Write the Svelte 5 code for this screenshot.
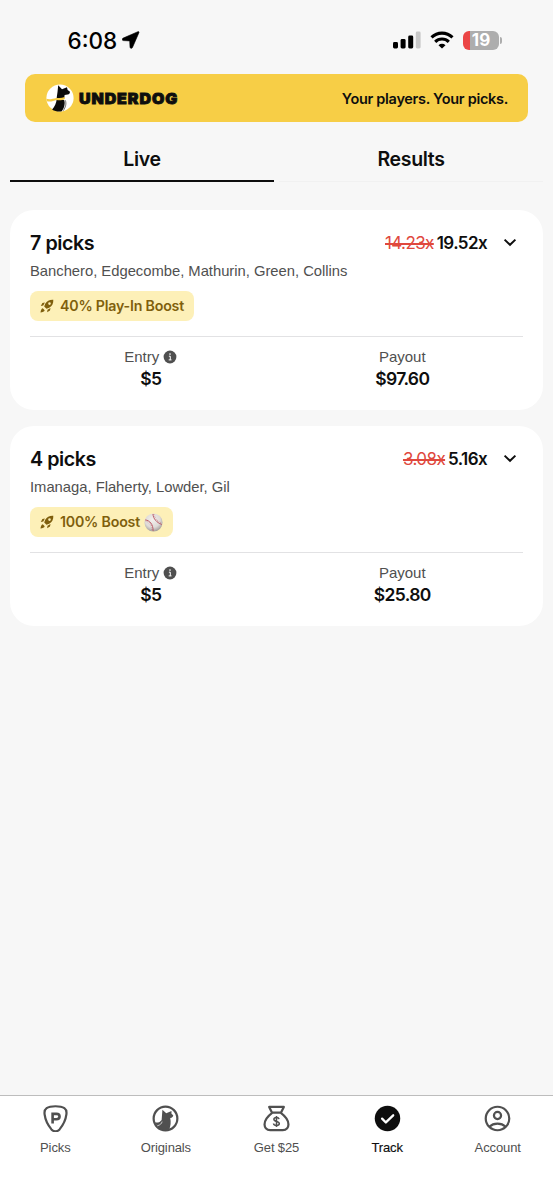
<script lang="ts">
  interface Entry {
    title: string;
    players: string;
    oldMultiplier: string;
    multiplier: string;
    boost: string;
    baseball?: boolean;
    entry: string;
    payout: string;
  }

  const tabs = ["Live", "Results"];
  const navItems = ["Picks", "Originals", "Get $25", "Track", "Account"];

  const entries: Entry[] = [
    {
      title: "7 picks",
      players: "Banchero, Edgecombe, Mathurin, Green, Collins",
      oldMultiplier: "14.23x",
      multiplier: "19.52x",
      boost: "40% Play-In Boost",
      entry: "$5",
      payout: "$97.60",
    },
    {
      title: "4 picks",
      players: "Imanaga, Flaherty, Lowder, Gil",
      oldMultiplier: "3.08x",
      multiplier: "5.16x",
      boost: "100% Boost",
      baseball: true,
      entry: "$5",
      payout: "$25.80",
    },
  ];

  let activeTab = $state("Live");
  let activeNav = $state("Track");
</script>

<div class="screen">
  <header class="status">
    <div class="status__left">
      <span class="status__time">6:08</span>
      <svg class="status__location" viewBox="0 0 18 18" aria-hidden="true">
        <path d="M15.9.7 1.2 7.1c-1.4.6-1.2 2.4.3 2.5l6.2.3.3 6.2c.1 1.5 1.9 1.7 2.5.3L16.9 1.7c.3-.8-.2-1.3-1-1Z" stroke="currentColor" stroke-width=".6" />
      </svg>
    </div>
    <div class="status__right">
      <svg class="status__signal" viewBox="0 0 28 18" aria-hidden="true">
        <rect x="0" y="11" width="5" height="6.5" rx="1.4" />
        <rect x="7.6" y="8" width="5" height="9.5" rx="1.4" />
        <rect x="15.2" y="4.6" width="5" height="12.9" rx="1.4" />
        <rect x="22.8" y="0.6" width="4.8" height="16.9" rx="1.4" fill="#c7c7c7" />
      </svg>
      <svg class="status__wifi" viewBox="0 0 24 18" aria-hidden="true">
        <path d="M1.5 6.4a15.1 15.1 0 0 1 21 0" />
        <path d="M5.2 10.8a9.8 9.8 0 0 1 13.6 0" />
        <path class="status__wifi-dot" d="M12 17.6 8.5 14.3a5 5 0 0 1 7 0Z" />
      </svg>
      <div class="battery">
        <div class="battery__body"><span>19</span></div>
        <div class="battery__cap"></div>
      </div>
    </div>
  </header>

  <div class="banner">
    <div class="banner__brand">
      <svg viewBox="0 0 28 28" aria-hidden="true">
        <circle cx="14" cy="14" r="13.6" fill="#fff" />
        <path d="M12.2 1.2 16 5.2l5-1.9.6 2.8 2.2 1.4c.5 1.7-.5 2.8-2.2 3l-3 .4-.4 3.6-7.6.6c.2-3.1 1-6.8 1.2-9.9Z" fill="#0b0b0b" />
        <path d="m10.8 14.6 7.3 1.5c1.4 3 .2 8.3-2.4 11.2-3.2.7-6.8 0-9.6-1.9 2.7-2.6 4.1-5.7 4.7-10.8Z" fill="#0b0b0b" />
        <path d="M.4 14.8c3.4 1 6.7-.2 10-.9 3 .4 5.5.3 8.2-.8l.2 1.8c-2.6 1.5-5.3 1.4-8.3 1.1-3.3 1.2-6.4 2.2-9.6 1.2Z" fill="#f5cb43" />
        <path d="M19.3 16.3c1.4 3.4.1 7.1-2 10.4" fill="none" stroke="#0b0b0b" stroke-width=".6" />
      </svg>
      <span>UNDERDOG</span>
    </div>
    <span class="banner__tagline">Your players. Your picks.</span>
  </div>

  <div class="tabs" role="tablist">
    {#each tabs as tab (tab)}
      <button
        type="button"
        class="tab"
        class:tab--active={activeTab === tab}
        role="tab"
        aria-selected={activeTab === tab}
        onclick={() => (activeTab = tab)}
      >
        {tab}
      </button>
    {/each}
  </div>

  <main class="entries">
    {#each entries as item (item.title)}
      <article class="card">
        <div class="card__head">
          <h2>{item.title}</h2>
          <div class="card__odds">
            <s>{item.oldMultiplier}</s>
            <b>{item.multiplier}</b>
            <svg viewBox="0 0 14 10" aria-hidden="true"><path d="m1.6 1.6 5.4 5.2 5.4-5.2" /></svg>
          </div>
        </div>
        <p class="card__players">{item.players}</p>
        <div class="boost">
          <svg class="boost__rocket" viewBox="0 0 14 14" aria-hidden="true">
            <path
              fill-rule="evenodd"
              d="M13.3.7c-3.8-.2-6.2 1-8.1 4.1L4.2 7.5l2.3 2.3 2.7-1.1C12.3 6.8 13.5 4.5 13.3.7ZM9.5 5.9a1.3 1.3 0 1 1 0-2.6 1.3 1.3 0 0 1 0 2.6Z"
            />
            <path d="M4.9 3.5 2.4 4 .8 6.9l2.5-.4ZM10.5 9.1l-.5 2.5-2.9 1.6.4-2.5ZM2.8 9.3c-1.5.5-2 2-2.3 4.2 2.2-.3 3.7-.8 4.2-2.3Z" />
          </svg>
          <span>{item.boost}</span>
          {#if item.baseball}
            <svg class="boost__ball" viewBox="0 0 20 20" aria-hidden="true">
              <defs>
                <radialGradient id="ball" cx=".45" cy=".35" r=".65">
                  <stop offset="0" stop-color="#f4f1ee" />
                  <stop offset=".65" stop-color="#dedad7" />
                  <stop offset="1" stop-color="#a49e9b" />
                </radialGradient>
              </defs>
              <circle cx="10" cy="10" r="9.5" fill="url(#ball)" />
              <g fill="none" stroke="#b64a58">
                <path d="M1.2 7.3c4.7.3 8.5 4.5 8.4 11.6M9.4 1.1c.4 5 3.8 8.9 9.4 11" stroke-width=".9" />
                <path d="M1.9 8.4c4.1.9 6.7 4.4 6.5 10M10.5 1.3c.5 4.4 3.6 7.6 8.1 9.5" stroke-width="1.8" stroke-dasharray=".6 1.3" opacity=".45" />
              </g>
            </svg>
          {/if}
        </div>
        <div class="stats">
          <div class="stat">
            <span class="stat__label">
              Entry
              <svg viewBox="0 0 14 14" aria-hidden="true">
                <circle cx="7" cy="7" r="6.4" fill="#4f4f4f" />
                <path d="M5.9 6.2h1.4v3.6M5.7 9.9h2.8" fill="none" stroke="#fff" stroke-width="1" />
                <circle cx="7" cy="4.1" r=".8" fill="#fff" />
              </svg>
            </span>
            <span class="stat__value">{item.entry}</span>
          </div>
          <div class="stat">
            <span class="stat__label">Payout</span>
            <span class="stat__value">{item.payout}</span>
          </div>
        </div>
      </article>
    {/each}
  </main>

  <nav class="nav">
    {#each navItems as name (name)}
      <button type="button" class="nav__item" class:nav__item--active={activeNav === name} onclick={() => (activeNav = name)}>
        <svg viewBox="0 0 28 28" aria-hidden="true">
          {#if name === "Picks"}
            <path class="line" d="M14 1.3c4.2 0 7.4.7 9.2 1.9 1.9 1.3 2.5 3.4 2.1 6.5-.7 5.6-3.5 11.2-7.1 15.6-2.6 2.8-5.8 2.8-8.4 0-3.6-4.4-6.4-10-7.1-15.6-.4-3.1.2-5.2 2.1-6.5C6.6 2 9.8 1.3 14 1.3Z" />
            <path d="M11 19.3V9.2h4c2.1 0 3.2 1 3.2 2.8s-1.1 2.8-3.2 2.8h-4" fill="none" stroke="currentColor" stroke-width="2.7" />
          {:else if name === "Originals"}
            <circle class="line" cx="14" cy="14" r="12.3" />
            <path d="m10.8 4.9 4 3.7 5.4-2.4v3l1.8 1.5c0 1.6-1 2.6-3.1 2.9.9 4.3.6 8.4-1.3 12.2-4.3 1-8.9-.2-11.6-3.2l-3.4-4.6c3.3.8 6-.3 7.4-2.4Z" />
            <path d="M5.4 21.6c3.2-.8 4.6-2.4 5.1-4.4" stroke="#fff" fill="none" stroke-width=".7" />
          {:else if name === "Get $25"}
            <path class="line" d="m9.4 8-3-6h15.2l-3 6ZM9.5 8.2c-4.8 3.6-8 7.9-7.9 12.1.1 3.6 2.4 5.7 5.9 5.7h13c3.5 0 5.8-2.1 5.9-5.7.1-4.2-3.1-8.5-7.9-12.1" />
            <path d="M16.7 14.7c-.3-1.2-1.2-1.8-2.7-1.8-1.7 0-2.7.7-2.7 2 0 3 5.6 1.4 5.6 4.4 0 1.3-1.1 2.1-2.9 2.1s-2.9-.8-3.1-2.2M14 11.4v11.4" fill="none" stroke="currentColor" stroke-width="1.6" />
          {:else if name === "Track"}
            <circle cx="14" cy="14" r="13.2" />
            <path d="m8.4 14.2 3.9 3.9 7.6-7.4" fill="none" stroke="#fff" stroke-width="2.4" stroke-linecap="round" stroke-linejoin="round" />
          {:else}
            <circle class="line" cx="14" cy="14" r="12.2" />
            <circle class="line" cx="14" cy="10.9" r="3.7" />
            <path class="line" d="M5.6 22.5c4.4-4.2 12.4-4.2 16.8 0" />
          {/if}
        </svg>
        <span>{name}</span>
      </button>
    {/each}
  </nav>
</div>

<style>
  :global(body) {
    background: #f7f7f7;
  }

  .screen {
    display: flex;
    flex-direction: column;
    width: 553px;
    height: 1200px;
    overflow: hidden;
    background: #f7f7f7;
    color: #0e0e0e;
    font-family: Inter, "Liberation Sans", sans-serif;
  }

  button {
    margin: 0;
    padding: 0;
    border: 0;
    background: none;
    color: inherit;
    font: inherit;
    cursor: pointer;
  }

  svg {
    display: block;
    flex: 0 0 auto;
    fill: currentColor;
  }

  /* Status bar */
  .status {
    display: flex;
    align-items: center;
    justify-content: space-between;
    height: 48px;
    padding: 16px 51px 10px 67.5px;
    color: #000;
  }

  .status__left,
  .status__right {
    display: flex;
    align-items: center;
  }

  .status__left {
    gap: 5px;
  }

  .status__time {
    font-size: 22.5px;
    font-weight: 540;
    letter-spacing: 0;
  }

  .status__location {
    width: 18px;
    height: 18px;
  }

  .status__signal {
    width: 28px;
    height: 18px;
  }

  .status__wifi {
    width: 24px;
    height: 18px;
    margin-left: 9px;
    fill: none;
    stroke: #000;
    stroke-width: 3.1;
  }

  .status__wifi-dot {
    fill: #000;
    stroke: none;
  }

  .battery {
    display: flex;
    align-items: center;
    gap: 1px;
    margin-left: 9px;
  }

  .battery__body {
    width: 36px;
    height: 19px;
    border-radius: 6px;
    background: linear-gradient(90deg, #eb4545 7px, #adadad 7px);
    color: #fff;
    font-size: 17px;
    font-weight: 700;
    line-height: 19px;
    text-align: center;
  }

  .battery__cap {
    width: 2px;
    height: 7px;
    border-radius: 0 2px 2px 0;
    background: #adadad;
  }

  /* Promo banner */
  .banner {
    display: flex;
    align-items: center;
    justify-content: space-between;
    height: 48px;
    margin: 0 25px;
    padding: 0 20px 0 21px;
    box-sizing: border-box;
    border-radius: 10px;
    background: #f7ce46;
  }

  .banner__brand {
    display: flex;
    align-items: center;
    gap: 5px;
    font-size: 14.5px;
    font-weight: 900;
    letter-spacing: 0.85px;
    -webkit-text-stroke: 0.8px #0e0e0e;
  }

  .banner__brand span {
    transform: scaleX(1.1);
    transform-origin: left;
  }

  .banner__brand svg {
    width: 28px;
    height: 28px;
  }

  .banner__tagline {
    font-size: 14.5px;
    font-weight: 600;
    letter-spacing: -0.3px;
  }

  /* Tabs */
  .tabs {
    display: grid;
    grid-template-columns: 264px 264px;
    justify-content: space-between;
    height: 60px;
    margin: 0 10px;
  }

  .tab {
    padding-top: 16px;
    border-bottom: 1px solid #f1f1f1;
    font-size: 19.5px;
    font-weight: 600;
    letter-spacing: -0.35px;
    line-height: 1;
  }

  .tab--active {
    padding-top: 17px;
    border-bottom: 2px solid #0e0e0e;
  }

  /* Entry cards */
  .entries {
    display: flex;
    flex: 1;
    flex-direction: column;
    gap: 16px;
    padding: 28px 10px 0;
  }

  .card {
    height: 200px;
    padding: 20px 20px 0;
    box-sizing: border-box;
    border-radius: 24px;
    background: #fff;
  }

  .card__head {
    display: flex;
    align-items: center;
    justify-content: space-between;
    height: 26px;
  }

  h2 {
    margin: 0;
    font-size: 19.7px;
    font-weight: 600;
    letter-spacing: -0.45px;
  }

  .card__odds {
    display: flex;
    align-items: center;
    gap: 3px;
    padding-right: 6px;
    font-size: 17px;
    letter-spacing: -0.6px;
  }

  .card__odds s {
    color: #e0483d;
    text-decoration-thickness: 1.5px;
  }

  .card__odds b {
    font-weight: 600;
  }

  .card__odds svg {
    width: 14px;
    height: 10px;
    margin-left: 13px;
    fill: none;
    stroke: #0e0e0e;
    stroke-width: 2;
  }

  .card__players {
    height: 22px;
    margin: 4px 0 9px;
    color: #505050;
    font-family: "Liberation Sans", sans-serif;
    font-size: 14.8px;
    letter-spacing: -0.02px;
    line-height: 22px;
    white-space: nowrap;
  }

  .boost {
    display: inline-flex;
    align-items: center;
    height: 30px;
    padding: 0 10px;
    border-radius: 8px;
    background: #fdf0b8;
    color: #7f5f0d;
    font-size: 14.2px;
    font-weight: 600;
    letter-spacing: -0.2px;
    line-height: 29px;
    vertical-align: top;
  }

  .boost span {
    margin-top: -1px;
  }

  .boost__rocket {
    width: 14px;
    height: 14px;
    margin-right: 6px;
  }

  .boost__ball {
    width: 19px;
    height: 19px;
    margin-left: 4px;
  }

  .stats {
    display: grid;
    grid-template-columns: 1fr 1fr;
    column-gap: 10px;
    margin-top: 15px;
    padding-top: 9px;
    border-top: 1px solid #e2e2e4;
  }

  .stat {
    display: flex;
    flex-direction: column;
    align-items: center;
    line-height: 22px;
  }

  .stat__label {
    display: flex;
    align-items: center;
    gap: 4px;
    color: #505050;
    font-family: "Liberation Sans", sans-serif;
    font-size: 15px;
  }

  .stat__label svg {
    width: 14px;
    height: 14px;
  }

  .stat__value {
    font-size: 17.5px;
    font-weight: 600;
    letter-spacing: -0.65px;
  }

  /* Bottom navigation */
  .nav {
    display: grid;
    grid-template-columns: repeat(5, 1fr);
    height: 105px;
    box-sizing: border-box;
    border-top: 1px solid #bdbdbd;
    background: #fff;
  }

  .nav__item {
    display: flex;
    flex-direction: column;
    align-items: center;
    gap: 7px;
    padding-top: 9px;
    color: #505050;
    font-family: "Liberation Sans", sans-serif;
    font-size: 13px;
    letter-spacing: -0.12px;
    line-height: 18px;
  }

  .nav__item--active {
    color: #0e0e0e;
  }

  .nav__item--active span {
    -webkit-text-stroke: 0.15px currentColor;
  }

  .nav__item svg {
    width: 27px;
    height: 27px;
  }

  .line {
    fill: none;
    stroke: currentColor;
    stroke-width: 2.3;
    stroke-linejoin: round;
  }
</style>
